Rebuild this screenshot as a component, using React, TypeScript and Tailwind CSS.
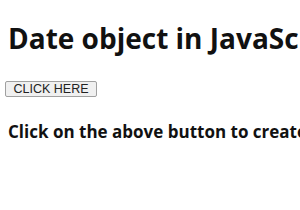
export default function App() {
  return (
    <div className="min-h-[210px] bg-white px-2 pt-[20px] text-black whitespace-nowrap overflow-hidden font-['Open_Sans',sans-serif]">
      <h1 className="text-[28px] font-bold leading-[36px] text-[#111]">Date object in JavaScript</h1>
      <button className="ml-[-3px] mt-[25px] block border border-[#a0a0a0] bg-[#f0f0f0] rounded-[2px] w-[92px] h-[16px] text-[12.5px] leading-[14px] text-[#222] font-['Liberation_Sans',sans-serif]">
        CLICK HERE
      </button>
      <h3 className="mt-[23px] text-[17px] font-bold leading-[24px] text-[#111]">Click on the above button to create a Date object</h3>
    </div>
  );
}
